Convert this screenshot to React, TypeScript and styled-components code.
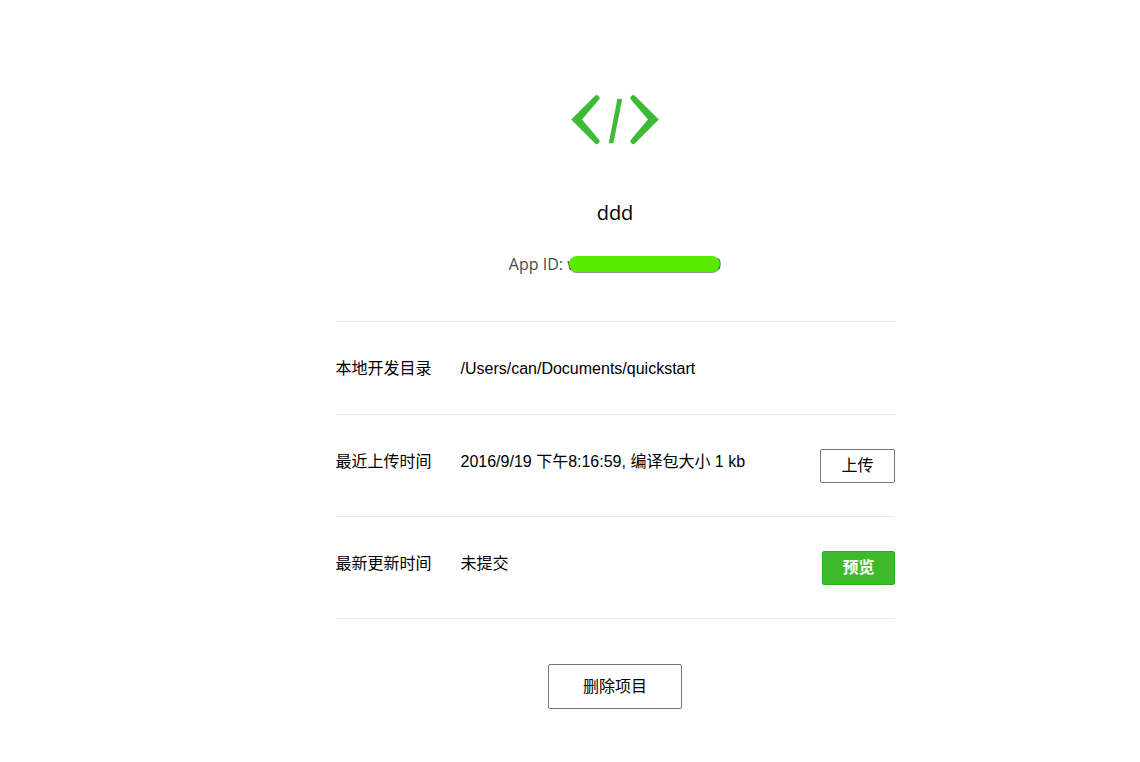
import React from "react";
import styled, { createGlobalStyle } from "styled-components";

const GlobalStyle = createGlobalStyle`
  * { box-sizing: border-box; }
  body {
    margin: 0;
    background: #fff;
    color: #000;
    font-family: "Liberation Sans", "Noto Sans CJK SC", sans-serif;
    font-size: 16px;
    line-height: 25px;
  }
`;

const Page = styled.main`
  display: flex;
  flex-direction: column;
  align-items: center;
  padding: 94px 0 54px 90px;
`;

const Logo = styled.svg`
  display: block;
  width: 88px;
  height: 52px;
`;

const Title = styled.h1`
  margin: 52px 0 0;
  font-family: "Open Sans", "Noto Sans CJK SC", sans-serif;
  font-size: 20px;
  font-weight: 400;
  line-height: 30px;
`;

const AppId = styled.p`
  display: flex;
  align-items: center;
  margin: 24px 0 44px;
  color: #4a4a4a;
  font-family: "Open Sans", "Noto Sans CJK SC", sans-serif;
  white-space: pre;
`;

const Redacted = styled.span`
  position: relative;
  display: flex;
  justify-content: space-between;
  width: 154px;

  &::after {
    content: "";
    position: absolute;
    inset: 4px 1px 5px 2px;
    border-radius: 8px;
    background: #58eb02;
    box-shadow: 0 1px 1px rgba(0, 0, 0, 0.45);
  }
`;

const Details = styled.dl`
  width: 100%;
  max-width: 559px;
  margin: 0;
  border-top: 1px solid #e9e9e9;
`;

const Row = styled.div`
  display: flex;
  align-items: flex-start;
  padding: 34px 0 33px;
  border-bottom: 1px solid #e9e9e9;
`;

const Label = styled.dt`
  flex: 0 0 125px;
`;

const Value = styled.dd`
  flex: 1;
  margin: 0;
`;

const Action = styled.dd`
  margin: 0;
`;

const Button = styled.button<{ $primary?: boolean; $large?: boolean }>`
  display: block;
  height: ${(p) => (p.$large ? 45 : 34)}px;
  padding: 0 ${(p) => (p.$large ? 34 : p.$primary ? 19 : 20)}px;
  border: 1px solid ${(p) => (p.$primary ? "#22b01e" : "#777")};
  border-radius: 2px;
  background: ${(p) => (p.$primary ? "#3cba2c" : "#fff")};
  color: ${(p) => (p.$primary ? "#fff" : "#000")};
  font: inherit;
  font-weight: ${(p) => (p.$primary ? 700 : 400)};
  line-height: 24px;
  cursor: pointer;
`;

const Footer = styled.footer`
  margin-top: 45px;
`;

export default function App() {
  return (
    <>
      <GlobalStyle />
      <Page>
        <Logo viewBox="0 0 88 52" aria-hidden="true">
          <g fill="#3fba35">
            <path d="M24.4 1.5Q25.7.4 27 1.5L28.2 2.7Q29.3 3.9 28.3 5.2L11 25.5L28.3 46.1Q29.3 47.4 28.2 48.6L27 49.8Q25.7 50.8 24.4 49.7L.2 25.5Z" />
            <path d="M63.6 1.5Q62.3.4 61 1.5L59.8 2.7Q58.7 3.9 59.7 5.2L77 25.5L59.7 46.1Q58.7 47.4 59.8 48.6L61 49.8Q62.3 50.8 63.6 49.7L87.8 25.5Z" />
            <path d="M46.4 5H51.2L42.4 49.3H37.7Z" />
          </g>
        </Logo>
        <Title>ddd</Title>
        <AppId>
          App ID: <Redacted><span>w</span><span>0</span></Redacted>
        </AppId>
        <Details>
          <Row>
            <Label>本地开发目录</Label>
            <Value>/Users/can/Documents/quickstart</Value>
          </Row>
          <Row>
            <Label>最近上传时间</Label>
            <Value>2016/9/19 下午8:16:59, 编译包大小 1 kb</Value>
            <Action><Button type="button">上传</Button></Action>
          </Row>
          <Row>
            <Label>最新更新时间</Label>
            <Value>未提交</Value>
            <Action><Button type="button" $primary>预览</Button></Action>
          </Row>
        </Details>
        <Footer>
          <Button type="button" $large>删除项目</Button>
        </Footer>
      </Page>
    </>
  );
}
